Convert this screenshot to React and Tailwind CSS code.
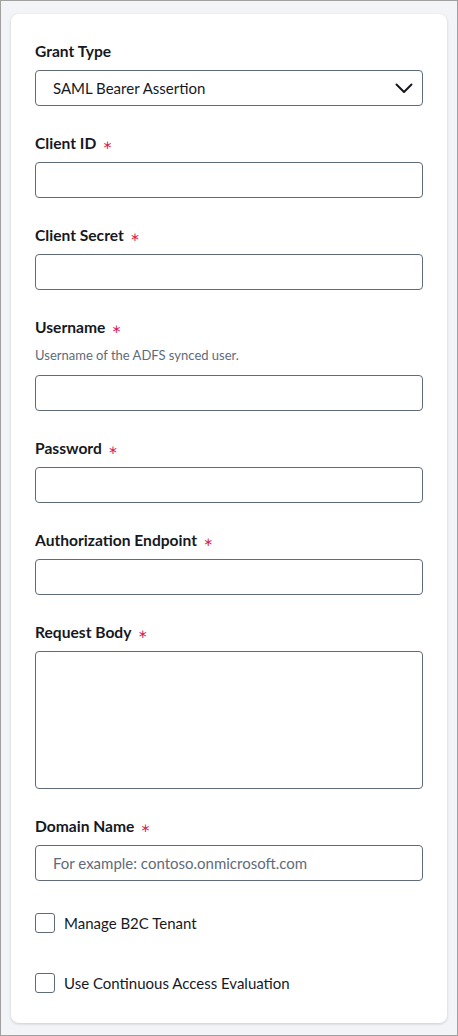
const font = { fontFamily: "Lato, 'Noto Sans', sans-serif" };

function Label({ children, required }) {
  return (
    <div className="flex h-5 items-center text-[15.6px] font-bold leading-5 text-[#16191f]">
      {children}
      {required && (
        <span
          style={{ fontFamily: "'DejaVu Sans', sans-serif" }}
          className="relative top-[2px] ml-[6px] text-[12px] font-normal text-[#d91d52]"
        >
          ∗
        </span>
      )}
    </div>
  );
}

function TextField({ label, required = true, help, placeholder }) {
  return (
    <div className="mb-[27px]">
      <Label required={required}>{label}</Label>
      {help && <p className="mt-2 text-[13px] leading-5 text-[#5f6b7a]">{help}</p>}
      <input
        placeholder={placeholder}
        className={`block h-9 w-full rounded-[4px] border border-[#5f6b7a] bg-white px-[17px] text-[15px] text-[#16191f] outline-none placeholder:text-[#5f6b7a] ${help ? "mt-[10px]" : "mt-[9px]"}`}
      />
    </div>
  );
}

function Check({ label }) {
  return (
    <label className="flex h-5 items-center gap-[9px] text-[15px] text-[#16191f]">
      <span className="h-5 w-5 rounded-[3px] border border-[#5f6b7a] bg-white" />
      {label}
    </label>
  );
}

export default function App() {
  return (
    <div style={font} className="min-h-[1036px] border border-[#a0a0a0] bg-[#f2f4f7] px-[10px] pt-[13px] pb-[11px]">
      <div className="rounded-[8px] bg-white px-6 pt-[27px] pb-[30px] shadow-[0_1px_3px_rgba(0,28,36,0.18)]">
        <div className="mb-[27px]">
          <Label>Grant Type</Label>
          <div className="mt-[9px] flex h-9 items-center justify-between rounded-[4px] border border-[#5f6b7a] pl-[17px] pr-[9px] text-[15px] text-[#16191f]">
            <span>SAML Bearer Assertion</span>
            <svg width="18" height="11" viewBox="0 0 18 11" fill="none" stroke="#16191f" strokeWidth="2" strokeLinecap="round" strokeLinejoin="round">
              <polyline points="1.5,1.5 9,9 16.5,1.5" />
            </svg>
          </div>
        </div>

        <TextField label="Client ID" />
        <TextField label="Client Secret" />
        <TextField label="Username" help="Username of the ADFS synced user." />
        <TextField label="Password" />
        <TextField label="Authorization Endpoint" />

        <div className="mb-[27px]">
          <Label required>Request Body</Label>
          <textarea className="mt-[9px] block h-[138px] w-full resize-none rounded-[4px] border border-[#5f6b7a] outline-none" />
        </div>

        <TextField label="Domain Name" placeholder="For example: contoso.onmicrosoft.com" />

        <div className="mt-[32px] flex flex-col gap-10">
          <Check label="Manage B2C Tenant" />
          <Check label="Use Continuous Access Evaluation" />
        </div>
      </div>
    </div>
  );
}
